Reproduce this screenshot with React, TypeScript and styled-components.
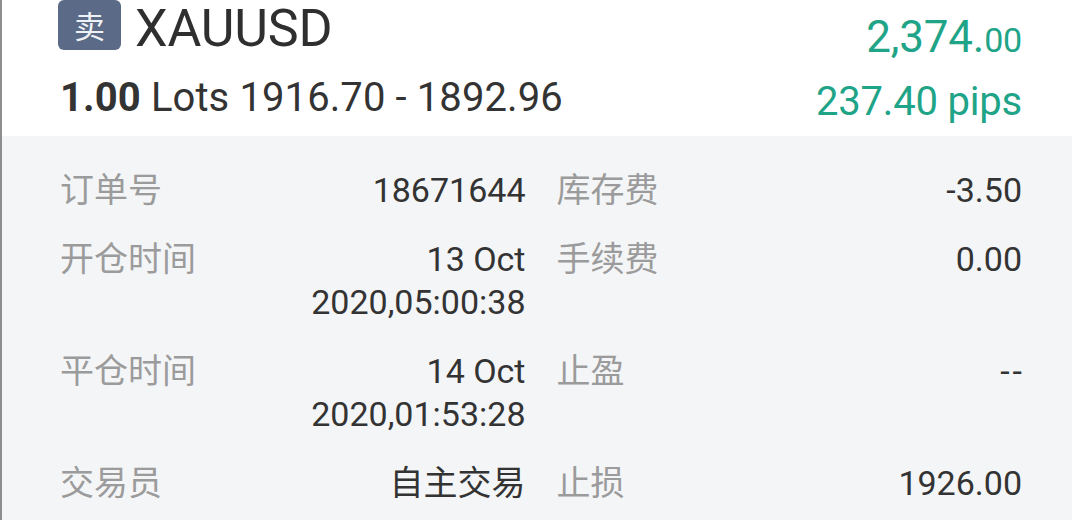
import React from "react";
import styled, { createGlobalStyle } from "styled-components";

const GlobalStyle = createGlobalStyle`
  html, body { margin: 0; padding: 0; background: #ffffff; }
  body {
    font-family: "Roboto", "Noto Sans CJK SC", sans-serif;
    -webkit-font-smoothing: antialiased;
  }
`;

const Page = styled.div`
  width: 1072px;
  height: 520px;
  box-sizing: border-box;
  border-left: 2px solid #8e8e8e;
  overflow: hidden;
  display: flex;
  flex-direction: column;
  background: #f4f5f7;
`;

const Header = styled.header`
  background: #ffffff;
  height: 136px;
  box-sizing: border-box;
  padding: 0 50px 0 56px;
  display: flex;
  justify-content: space-between;
`;

const LeftCol = styled.div`
  display: flex;
  flex-direction: column;
`;

const RightCol = styled.div`
  display: flex;
  flex-direction: column;
  align-items: flex-end;
`;

const SymbolRow = styled.div`
  display: flex;
  align-items: center;
  gap: 14px;
  height: 50px;
`;

const SideBadge = styled.span`
  width: 63px;
  height: 50px;
  border-radius: 6px;
  background: #5b6a86;
  color: #eef1f5;
  font-family: "Noto Sans CJK SC", sans-serif;
  font-size: 31px;
  line-height: 50px;
  text-align: center;
`;

const Symbol = styled.span`
  font-size: 52px;
  line-height: 42px;
  color: #2f2f2f;
  padding-top: 8px;
  letter-spacing: -0.2px;
  white-space: nowrap;
`;

const LotsLine = styled.div`
  margin-top: 26px;
  font-size: 40px;
  line-height: 44px;
  color: #333333;
  letter-spacing: 0.1px;
  padding-left: 2px;
  white-space: nowrap;
`;

const Strong = styled.span`
  font-weight: 700;
`;

const Profit = styled.div`
  margin-top: 15px;
  color: #1fa488;
  font-size: 44px;
  line-height: 44px;
  letter-spacing: -0.2px;
  white-space: nowrap;
`;

const Decimals = styled.span`
  font-size: 34px;
`;

const Pips = styled.div`
  margin-top: 18px;
  color: #1fa488;
  font-size: 40px;
  line-height: 44px;
  letter-spacing: -0.2px;
  white-space: nowrap;
`;

const Details = styled.section`
  padding: 33px 50px 0 58px;
  display: flex;
  flex-direction: column;
  gap: 26px;
`;

const Row = styled.div`
  display: grid;
  grid-template-columns: 1fr 1fr;
  column-gap: 31px;
`;

const Field = styled.div`
  display: flex;
  justify-content: space-between;
  align-items: flex-start;
  font-size: 34px;
  line-height: 43px;
`;

const Label = styled.span`
  color: #9b9b9b;
  white-space: nowrap;
`;

const Value = styled.span`
  color: #333333;
  text-align: right;
  white-space: nowrap;
`;

const ValueLine = styled.span`
  display: block;
`;

const Dashes = styled.span`
  letter-spacing: 3px;
  margin-right: -3px;
`;

type Item = { label: string; value: string[] };

const rows: [Item, Item][] = [
  [
    { label: "订单号", value: ["18671644"] },
    { label: "库存费", value: ["-3.50"] },
  ],
  [
    { label: "开仓时间", value: ["13 Oct", "2020,05:00:38"] },
    { label: "手续费", value: ["0.00"] },
  ],
  [
    { label: "平仓时间", value: ["14 Oct", "2020,01:53:28"] },
    { label: "止盈", value: ["--"] },
  ],
  [
    { label: "交易员", value: ["自主交易"] },
    { label: "止损", value: ["1926.00"] },
  ],
];

export default function App() {
  return (
    <>
      <GlobalStyle />
      <Page>
        <Header>
          <LeftCol>
            <SymbolRow>
              <SideBadge>卖</SideBadge>
              <Symbol>XAUUSD</Symbol>
            </SymbolRow>
            <LotsLine>
              <Strong>1.00</Strong> Lots 1916.70 - 1892.96
            </LotsLine>
          </LeftCol>
          <RightCol>
            <Profit>
              2,374.<Decimals>00</Decimals>
            </Profit>
            <Pips>237.40 pips</Pips>
          </RightCol>
        </Header>
        <Details>
          {rows.map((pair, i) => (
            <Row key={i}>
              {pair.map((item) => (
                <Field key={item.label}>
                  <Label>{item.label}</Label>
                  <Value>
                    {item.value.map((v) => (
                      <ValueLine key={v}>
                        {v === "--" ? <Dashes>--</Dashes> : v}
                      </ValueLine>
                    ))}
                  </Value>
                </Field>
              ))}
            </Row>
          ))}
        </Details>
      </Page>
    </>
  );
}
